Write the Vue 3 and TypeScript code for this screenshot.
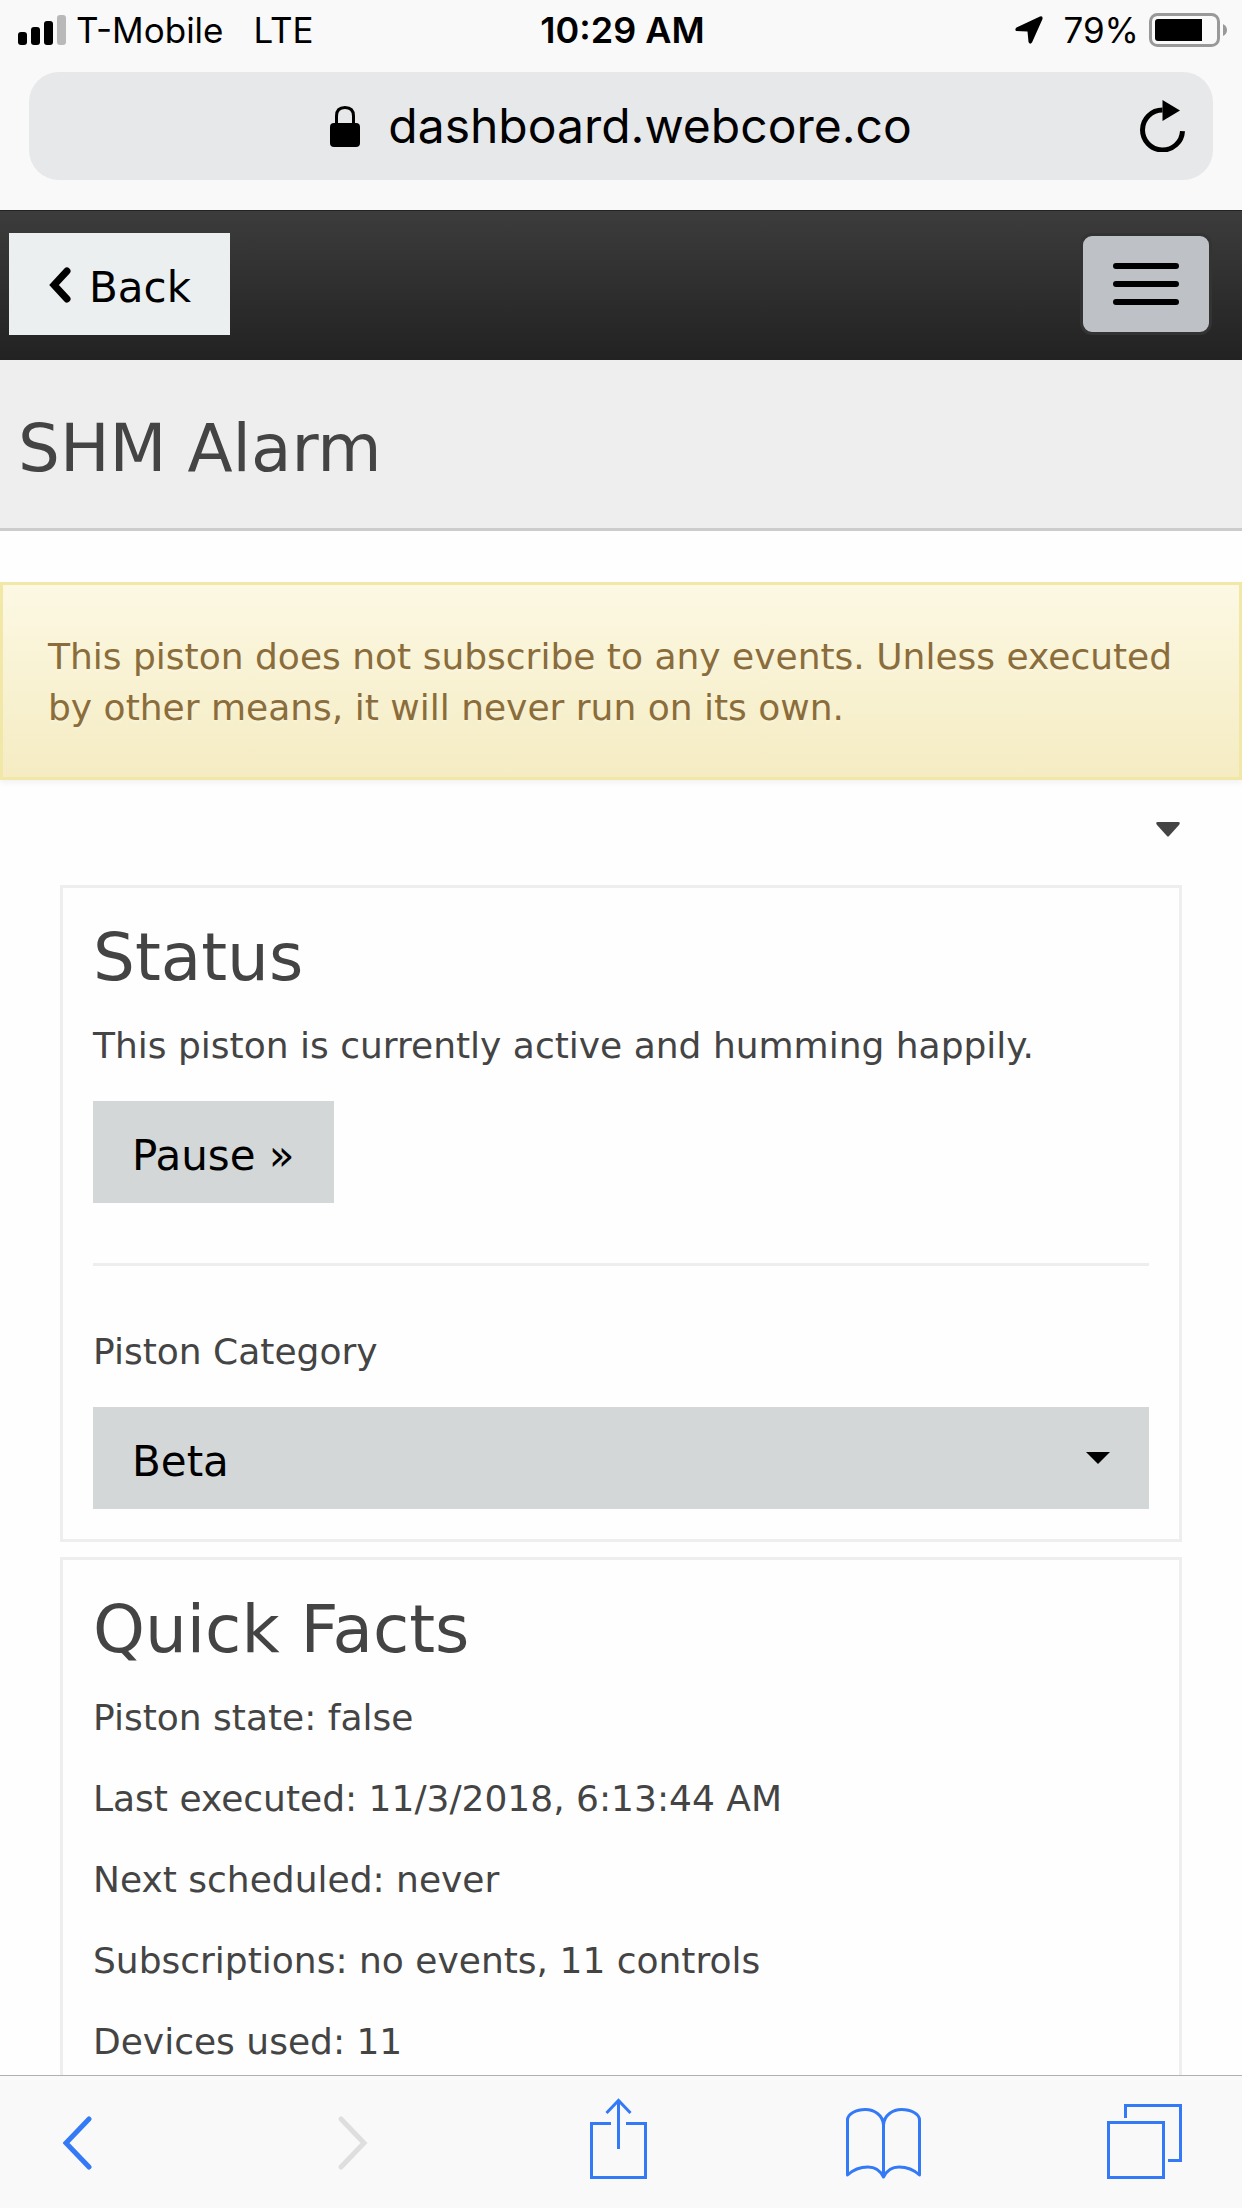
<script setup lang="ts">
import { ref } from 'vue'

const category = ref('Beta')
const categories: string[] = ['Beta']

const facts: string[] = [
  'Piston state: false',
  'Last executed: 11/3/2018, 6:13:44 AM',
  'Next scheduled: never',
  'Subscriptions: no events, 11 controls',
  'Devices used: 11',
]
</script>

<template>
  <div class="screen">
    <header class="chrome">
      <div class="status-bar">
        <div class="carrier">
          <svg class="signal" width="48" height="30" viewBox="0 0 48 30" aria-hidden="true">
            <rect x="0" y="17" width="9" height="13" rx="3" />
            <rect x="13" y="12" width="9" height="18" rx="3" />
            <rect x="26" y="6" width="9" height="24" rx="3" />
            <rect x="39" y="0" width="9" height="30" rx="3" fill="#b9b9b9" />
          </svg>
          <span class="carrier-name">T-Mobile</span>
          <span>LTE</span>
        </div>
        <time class="clock">10:29 AM</time>
        <div class="power">
          <svg width="28" height="28" viewBox="0 0 28 28" aria-hidden="true">
            <path d="M25 0.500 L1.500 11.500 Q-0.500 13 1 15 L12.500 15.500 L13.500 26 Q15 29 17 26.500 L27.500 3 Q28 -0.500 25 0.500Z" />
          </svg>
          <span class="percent">79%</span>
          <svg width="78" height="34" viewBox="0 0 78 34" aria-hidden="true">
            <rect x="1.500" y="1.500" width="68" height="31" rx="7" fill="none" stroke="#999" stroke-width="3" />
            <path d="M9 6 H53 V28 H9 Q6 28 6 25 V9 Q6 6 9 6Z" />
            <path d="M74 11 Q78 13 78 17 Q78 21 74 23Z" fill="#999" />
          </svg>
        </div>
      </div>
      <div class="address-bar">
        <button class="address" type="button">
          <svg width="30" height="41" viewBox="0 0 30 41" aria-hidden="true">
            <path d="M6.500 20 V10 Q6.500 1.500 15 1.500 Q23.500 1.500 23.500 10 V20" fill="none" stroke="#000" stroke-width="3" />
            <rect x="0" y="17" width="30" height="24" rx="4" />
          </svg>
          <span>dashboard.webcore.co</span>
        </button>
        <button class="reload" type="button" aria-label="Reload">
          <svg width="45" height="52" viewBox="0 0 45 52" aria-hidden="true">
            <path d="M42.500 31 A20 20 0 1 1 22.500 10" fill="none" stroke="#000" stroke-width="5" />
            <path d="M22.500 0 L40 10.500 L22.500 21Z" />
          </svg>
        </button>
      </div>
    </header>

    <main class="content">
      <nav class="navbar">
        <button class="btn btn-back" type="button">
          <svg width="24" height="40" viewBox="0 0 24 40" aria-hidden="true">
            <path d="M19 4 L6 18 L19 32" fill="none" stroke="#000" stroke-width="7" stroke-linecap="round" stroke-linejoin="miter" />
          </svg>
          <span>Back</span>
        </button>
        <button class="menu-toggle" type="button" aria-label="Toggle navigation">
          <span class="bar"></span>
          <span class="bar"></span>
          <span class="bar"></span>
        </button>
      </nav>

      <div class="title-band">
        <h1>SHM Alarm</h1>
      </div>

      <p class="alert" role="alert">
        This piston does not subscribe to any events. Unless executed by other means, it will never run on its own.
      </p>

      <div class="panel-tools">
        <button class="collapse" type="button" aria-label="More options">
          <svg width="24" height="15" viewBox="0 0 24 15" aria-hidden="true">
            <path d="M2 0 H22 Q25 0 23 3 L13 14 Q12 15 11 14 L1 3 Q-1 0 2 0Z" fill="#444" />
          </svg>
        </button>
      </div>

      <div class="panels">
        <section class="panel">
          <h2>Status</h2>
          <p>This piston is currently active and humming happily.</p>
          <button class="btn" type="button">Pause »</button>
          <hr />
          <label for="category">Piston Category</label>
          <div class="select">
            <select id="category" v-model="category">
              <option v-for="name in categories" :key="name">{{ name }}</option>
            </select>
            <svg class="select-caret" width="24" height="12" viewBox="0 0 24 12" aria-hidden="true">
              <path d="M0 0 H24 L12 12Z" />
            </svg>
          </div>
        </section>

        <section class="panel">
          <h2>Quick Facts</h2>
          <p v-for="fact in facts" :key="fact">{{ fact }}</p>
        </section>
      </div>
    </main>

    <footer class="toolbar">
      <button type="button" aria-label="Previous page">
        <svg width="75" height="81" viewBox="0 0 75 81">
          <path d="M26 21 L3 45 L26 69" stroke-width="5" stroke-linecap="round" />
        </svg>
      </button>
      <button type="button" aria-label="Next page" disabled>
        <svg width="75" height="81" viewBox="0 0 75 81">
          <path d="M17 21 L40 45 L17 69" stroke-width="5" stroke-linecap="round" />
        </svg>
      </button>
      <button type="button" aria-label="Share">
        <svg width="75" height="81" viewBox="0 0 75 81">
          <path d="M26 25.500 H6.500 V79.500 H60.500 V25.500 H41" />
          <path d="M33.500 51 V3 M21.500 15 L33.500 2.500 L45.500 15" />
        </svg>
      </button>
      <button type="button" aria-label="Bookmarks">
        <svg width="75" height="81" viewBox="0 0 75 81">
          <path d="M37.500 79 V27 C37 17 28 11.500 19.500 11.500 C10 11.500 1.500 16 1.500 22 V77 C9 70 16 69 22 69 C31 69 35 74 37.500 79 C40 74 44 69 53 69 C59 69 66 70 73.500 77 V22 C73.500 16 65 11.500 55.500 11.500 C47 11.500 38 17 37.500 27" stroke-linejoin="round" />
        </svg>
      </button>
      <button type="button" aria-label="Tabs">
        <svg width="75" height="81" viewBox="0 0 75 81">
          <rect x="1.500" y="24.500" width="55" height="55" />
          <path d="M18.500 20 V7.500 H73.500 V62.500 H61" />
        </svg>
      </button>
    </footer>
  </div>
</template>

<style>
body {
  background: #fefefe;
}
</style>

<style scoped>
.screen {
  display: flex;
  flex-direction: column;
  height: 100vh;
  color: #444;
  font-family: Verdana, "DejaVu Sans", sans-serif;
  font-size: 36px;
  line-height: 51px;
}

button,
select {
  margin: 0;
  padding: 0;
  border: 0;
  border-radius: 0;
  background: none;
  color: #000;
  font: inherit;
  cursor: pointer;
}

svg {
  display: block;
  flex: none;
}

h1,
h2 {
  margin: 0;
  font-size: 66px;
  font-weight: 400;
  line-height: 80px;
}

/* Browser header */
.chrome {
  flex: none;
  padding-bottom: 30px;
  background: #f9f9f9;
  color: #000;
  font-family: Inter, "Liberation Sans", sans-serif;
}

.status-bar {
  display: grid;
  grid-template-columns: 1fr auto 1fr;
  align-items: center;
  height: 60px;
  padding: 0 15px 0 18px;
  margin-bottom: 12px;
  font-size: 35px;
}

.carrier,
.power {
  display: flex;
  align-items: center;
}

.signal {
  margin-right: 10px;
}

.carrier-name {
  margin-right: 30px;
}

.clock {
  font-size: 36px;
  font-weight: 600;
}

.power {
  justify-content: flex-end;
}

.percent {
  margin: 0 10px 0 20px;
}

.address-bar {
  display: grid;
  grid-template-columns: 1fr auto 1fr;
  align-items: center;
  height: 108px;
  margin: 0 29px;
  padding: 0 28px;
  border-radius: 30px;
  background: #e7e8ea;
}

.address {
  grid-column: 2;
  display: flex;
  align-items: center;
  gap: 28px;
  font-size: 48px;
  line-height: 60px;
}

.reload {
  justify-self: end;
}

/* Page */
.content {
  flex: 1;
  min-height: 0;
  overflow-y: auto;
  scrollbar-width: none;
}

.navbar {
  display: flex;
  align-items: center;
  justify-content: space-between;
  height: 150px;
  box-sizing: border-box;
  padding: 0 30px 3px 9px;
  border-top: 1px solid #222;
  background: linear-gradient(#3c3c3c, #222);
}

.btn {
  display: block;
  height: 102px;
  padding: 6px 39px 0;
  background: #d3d7d8;
  font-size: 42px;
}

.btn-back {
  display: flex;
  align-items: center;
  gap: 17px;
  background: #ebeff0;
}

.menu-toggle {
  display: flex;
  flex-direction: column;
  align-items: center;
  justify-content: center;
  gap: 12px;
  width: 132px;
  height: 102px;
  border: 3px solid #333;
  border-radius: 12px;
  background: #bec1c6;
}

.bar {
  width: 66px;
  height: 6px;
  border-radius: 3px;
  background: #000;
}

.title-band {
  padding: 49px 18px 39px;
  border-bottom: 3px solid #ccc;
  background: #eee;
}

.alert {
  margin: 51px 0 0;
  padding: 46px 45px 44px;
  border: 3px solid #f1e7a7;
  background: linear-gradient(#fcf8e3, #f5ecc3);
  box-shadow: 0 3px 6px rgba(0, 0, 0, 0.05);
  color: #8a6d3b;
  text-shadow: 0 3px 0 rgba(255, 255, 255, 0.2);
}

.panel-tools {
  display: flex;
  align-items: center;
  justify-content: flex-end;
  height: 105px;
  padding: 0 60px;
}

.collapse {
  padding: 0 2px 6px;
}

.panels {
  display: flex;
  flex-direction: column;
  gap: 15px;
  padding: 0 60px;
}

.panel {
  padding: 30px;
  border: 3px solid #eee;
}

.panel h2 {
  margin-bottom: 22px;
}

.panel p {
  margin: 0 0 30px;
}

.panel hr {
  height: 3px;
  margin: 60px 0;
  border: 0;
  background: #eee;
}

.panel label {
  display: block;
  margin-bottom: 30px;
}

.select {
  position: relative;
}

.select select {
  display: block;
  width: 100%;
  height: 102px;
  padding: 6px 39px 0;
  appearance: none;
  background: #d3d7d8;
  font-size: 42px;
}

.select-caret {
  position: absolute;
  top: 45px;
  right: 39px;
  pointer-events: none;
}

/* Browser toolbar */
.toolbar {
  display: flex;
  flex: none;
  align-items: flex-start;
  justify-content: space-between;
  height: 133px;
  box-sizing: border-box;
  padding: 22px 60px 0 63px;
  border-top: 1px solid #b0b0b0;
  background: #f9f9f9;
}

.toolbar svg {
  fill: none;
  stroke: #347af6;
  stroke-width: 3;
}

.toolbar button:disabled svg {
  stroke: #dedede;
}
</style>
